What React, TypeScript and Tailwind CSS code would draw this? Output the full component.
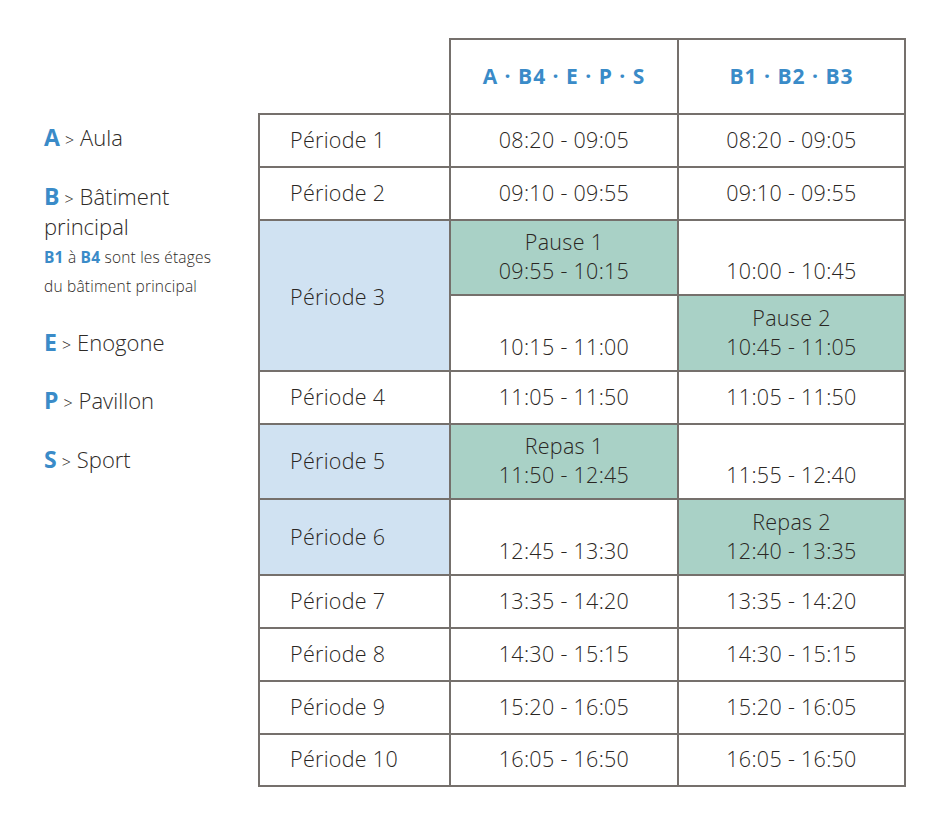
import type { ReactNode } from 'react'

type Row =
  | { kind: 'plain'; label: string; a: string; b: string }
  | { kind: 'split'; label: string; rows: [Slot, Slot][]; span: boolean }

type Slot = { title?: string; time: string }

const font = { fontFamily: '"Open Sans", "Liberation Sans", sans-serif' }

const border = 'border-2 border-[#75706c]'

function Legend({ letter, children }: { letter: string; children: ReactNode }) {
  return (
    <div className="text-[22px] leading-[30px] text-[#2e2a27]">
      <span className="font-bold text-[#3a8bc8] text-[23px] leading-none">{letter}</span>
      <span className="text-[16px] ml-[5px] mr-[6px] leading-none">&gt;</span>
      {children}
    </div>
  )
}

function SlotCell({ slot }: { slot: Slot }) {
  return (
    <td
      className={`${border} text-center align-middle pb-[3px] ${slot.title ? 'bg-[#a9d1c6]' : 'bg-white'}`}
    >
      <div className="leading-[29px]">{slot.title ?? '\u00a0'}</div>
      <div className="leading-[29px]">{slot.time}</div>
    </td>
  )
}

export default function App() {
  const plain = (n: number, a: string, b = a): Row => ({ kind: 'plain', label: `Période ${n}`, a, b })

  return (
    <div className="min-h-[822px] w-[940px] bg-white pt-[38px] flex items-start" style={font}>
      <div className="w-[259px] pl-[44px] pr-[40px] mt-[84px] shrink-0 font-light">
        <Legend letter="A">Aula</Legend>
        <div className="mt-[29px]">
          <Legend letter="B">
            <span>Bâtiment</span>
            <br />
            <span>principal</span>
          </Legend>
          <div className="mt-[2px] text-[15.5px] leading-[29px] tracking-[0.2px] text-[#2e2a27] whitespace-nowrap">
            <span className="font-bold text-[#3a8bc8]">B1</span> à{' '}
            <span className="font-bold text-[#3a8bc8]">B4</span> sont les étages
            <br />
            du bâtiment principal
          </div>
        </div>
        <div className="mt-[26px]">
          <Legend letter="E">Enogone</Legend>
        </div>
        <div className="mt-[28px]">
          <Legend letter="P">Pavillon</Legend>
        </div>
        <div className="mt-[29px]">
          <Legend letter="S">Sport</Legend>
        </div>
      </div>

      <table className="border-collapse table-fixed w-[646px] -ml-px text-[21.5px] tracking-[0.3px] font-light text-[#2a2623]">
        <colgroup>
          <col className="w-[191px]" />
          <col className="w-[228px]" />
          <col className="w-[227px]" />
        </colgroup>
        <thead>
          <tr className="h-[75px]">
            <th className="border-0" />
            <th className={`${border} text-[21px] font-bold text-[#3a8bc8] tracking-[1px]`}>
              A · B4 · E · P · S
            </th>
            <th className={`${border} text-[21px] font-bold text-[#3a8bc8] tracking-[1px]`}>
              B1 · B2 · B3
            </th>
          </tr>
        </thead>
        <tbody>
          {[plain(1, '08:20 - 09:05'), plain(2, '09:10 - 09:55')].map((r) => (
            <PlainRow key={r.label} row={r} />
          ))}

          <tr className="h-[75px]">
            <td rowSpan={2} className={`${border} bg-[#d0e2f2] pl-[30px] pt-[3px]`}>
              Période 3
            </td>
            <SlotCell slot={{ title: 'Pause 1', time: '09:55 - 10:15' }} />
            <SlotCell slot={{ time: '10:00 - 10:45' }} />
          </tr>
          <tr className="h-[76px]">
            <SlotCell slot={{ time: '10:15 - 11:00' }} />
            <SlotCell slot={{ title: 'Pause 2', time: '10:45 - 11:05' }} />
          </tr>

          <PlainRow row={plain(4, '11:05 - 11:50')} />

          <tr className="h-[75px]">
            <td className={`${border} bg-[#d0e2f2] pl-[30px]`}>Période 5</td>
            <SlotCell slot={{ title: 'Repas 1', time: '11:50 - 12:45' }} />
            <SlotCell slot={{ time: '11:55 - 12:40' }} />
          </tr>
          <tr className="h-[76px]">
            <td className={`${border} bg-[#d0e2f2] pl-[30px]`}>Période 6</td>
            <SlotCell slot={{ time: '12:45 - 13:30' }} />
            <SlotCell slot={{ title: 'Repas 2', time: '12:40 - 13:35' }} />
          </tr>

          {[
            plain(7, '13:35 - 14:20'),
            plain(8, '14:30 - 15:15'),
            plain(9, '15:20 - 16:05'),
          ].map((r) => (
            <PlainRow key={r.label} row={r} />
          ))}
          <PlainRow row={plain(10, '16:05 - 16:50')} last />
        </tbody>
      </table>
    </div>
  )
}

function PlainRow({ row, last }: { row: Row; last?: boolean }) {
  if (row.kind !== 'plain') return null
  return (
    <tr className={last ? 'h-[52px]' : 'h-[53px]'}>
      <td className={`${border} pl-[30px] pb-px`}>{row.label}</td>
      <td className={`${border} text-center pb-px`}>{row.a}</td>
      <td className={`${border} text-center pb-px`}>{row.b}</td>
    </tr>
  )
}
